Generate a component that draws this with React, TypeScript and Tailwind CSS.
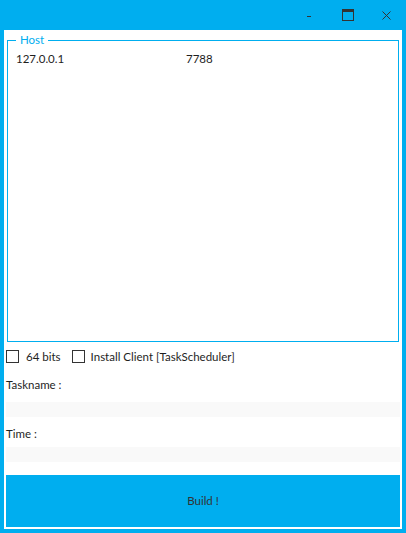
import { useState } from "react";

export default function App() {
  const [x64, setX64] = useState(false);
  const [install, setInstall] = useState(false);

  return (
    <div
      className="flex h-[533px] w-[406px] flex-col bg-[#00aeef] text-[11.5px] text-[#1e1e1e]"
      style={{ fontFamily: 'Lato, "Noto Sans", sans-serif' }}
    >
      {/* title bar */}
      <div className="flex h-[30px] shrink-0 items-center justify-end">
        <div className="flex h-[30px] w-[38px] items-center justify-center">
          <div className="mt-[2px] h-[1px] w-[4px] bg-[#333]" />
        </div>
        <div className="flex h-[30px] w-[40px] items-center justify-center">
          <div className="h-[12px] w-[12px] border border-t-[3px] border-[#333]" />
        </div>
        <div className="flex h-[30px] w-[38px] items-center justify-center">
          <svg width="9" height="9" viewBox="0 0 9 9" className="mr-[2px]">
            <path d="M0.5 0.5 L8.5 8.5 M8.5 0.5 L0.5 8.5" stroke="#333" strokeWidth="1" />
          </svg>
        </div>
      </div>

      {/* client area */}
      <div className="mx-[4px] mb-[4px] flex flex-1 flex-col bg-white px-[2px]">
        <fieldset className="ml-[1px] mr-[1px] mt-[2px] h-[310px] border border-[#00aeef] px-[8px]">
          <legend className="px-[4px] leading-[16px] text-[#00aeef]">Host</legend>
          <div className="mt-[3px] flex leading-[16px]">
            <span className="w-[170px]">127.0.0.1</span>
            <span>7788</span>
          </div>
        </fieldset>

        <div className="mt-[8px] flex h-[13px] items-center">
          <label className="flex items-center">
            <input
              type="checkbox"
              checked={x64}
              onChange={(e) => setX64(e.target.checked)}
              className="h-[13px] w-[13px] appearance-none border border-[#333] bg-white"
            />
            <span className="ml-[7px]">64 bits</span>
          </label>
          <label className="ml-[11px] flex items-center">
            <input
              type="checkbox"
              checked={install}
              onChange={(e) => setInstall(e.target.checked)}
              className="h-[13px] w-[13px] appearance-none border border-[#333] bg-white"
            />
            <span className="ml-[6px]">Install Client [TaskScheduler]</span>
          </label>
        </div>

        <div className="mt-[14px] leading-[16px]">Taskname :</div>
        <input className="mt-[9px] h-[15px] w-full bg-[#f9f9f9] outline-none" />

        <div className="mt-[9px] leading-[16px]">Time :</div>
        <input className="mt-[5px] h-[15px] w-full bg-[#f9f9f9] outline-none" />

        <button className="mt-[13px] h-[52px] w-full bg-[#00aeef] text-[#333]">Build !</button>
      </div>
    </div>
  );
}
